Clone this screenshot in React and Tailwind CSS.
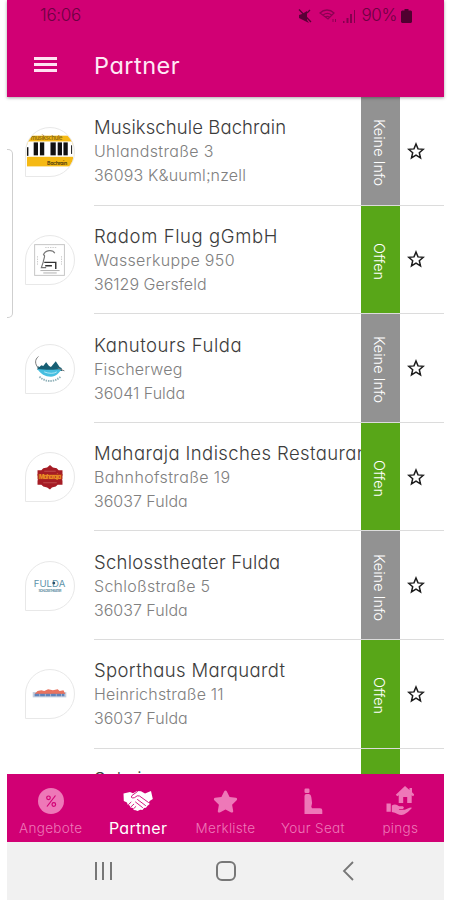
import React from "react";
import { FaStar } from "react-icons/fa";

const MusikLogo = () => (
  <svg viewBox="0 0 50 50" className="h-full w-full">
    <rect x="1" y="8" width="48" height="32" fill="#f5b914" />
    <rect x="1" y="14" width="48" height="16" fill="#fff" />
    <g fill="#111">
      <rect x="8" y="15" width="4.500" height="13.500" />
      <rect x="14.500" y="15" width="4.500" height="13.500" />
      <rect x="25.500" y="15" width="5.500" height="13.500" />
      <rect x="33" y="15" width="4.500" height="13.500" />
      <rect x="39" y="15" width="4.500" height="13.500" />
      <rect x="1" y="20" width="1.500" height="9" />
      <rect x="47" y="18" width="1" height="9" />
    </g>
    <text x="5" y="13" fontSize="6" fontWeight="600" fill="#8c6a12" textLength="33">
      musikschule
    </text>
    <text x="22" y="38.500" fontSize="5.500" fontWeight="700" fill="#5c480f" textLength="21">
      Bachrain
    </text>
  </svg>
);

const RadomLogo = () => (
  <svg viewBox="0 0 50 50" className="h-full w-full" fill="none">
    <rect x="9" y="9" width="31" height="32" stroke="#c4c4c4" />
    <path d="M20 12h12M12 21v10M37 21v10" stroke="#ccc" strokeDasharray="1.500 1" />
    <path
      d="M30 18c-2-4-10-4-12 2M18 20c3-1 0 5 0 7l-2 6h5"
      stroke="#777"
      strokeWidth="1.200"
    />
    <path d="M19 27.500h12v7M20 31h7" stroke="#333" strokeWidth="1.500" />
    <path d="M15 36h20M18 38.500h14" stroke="#999" strokeWidth="0.800" />
  </svg>
);

const KanuLogo = () => (
  <svg viewBox="0 0 50 50" className="h-full w-full" fill="none">
    <path d="M12 26v-4l2 1 2-2 2 1 3-4 3 4 2 1 5-6 4 6 2 1 1 3z" fill="#175f74" />
    <path d="M12 25c7 1 19 1 25 0-2 4-6 8-11 8-6 0-11-3-14-8z" fill="#47bfe0" />
    <path d="M19 28c5 2 10 2 13 0" stroke="#b5e8f5" />
    <path d="M13 12c-4 3-4 8 0 12M33 24l7 3" stroke="#777" />
    <path d="M14 33c6 6 16 6 22 0" stroke="#8fb0b8" strokeWidth="2" strokeDasharray="1.500 1" />
  </svg>
);

const MaharajaLogo = () => (
  <svg viewBox="0 0 50 50" className="h-full w-full">
    <path
      d="M25 12.500l3 2.500 4 1 2 2h4v5l-1 3 1 3v4h-5l-2 2-4 1-2 2-3-2-4-1-2-2h-4v-4l1-3-1-3v-5h4l2-2 4-1z"
      fill="#a51c25"
    />
    <rect x="12" y="22" width="26" height="5.500" fill="#b2351f" />
    <text x="13.500" y="27" fontSize="6" fontWeight="700" fill="#f09a27" textLength="23">
      Maharaja
    </text>
    <path d="M19 19h12M18 31h14" stroke="#c65a5a" strokeWidth="0.800" />
  </svg>
);

const FuldaLogo = () => (
  <svg viewBox="0 0 50 50" className="h-full w-full">
    <text x="8" y="26" fontSize="10" fill="#5e94aa" textLength="33">
      FULDA
    </text>
    <circle cx="29" cy="22" r="1.500" fill="#27506b" />
    <text x="13" y="31" fontSize="3.500" fontWeight="700" fill="#6e98aa" textLength="24">
      SCHLOSSTHEATER
    </text>
  </svg>
);

const SportLogo = () => (
  <svg viewBox="0 0 50 50" className="h-full w-full">
    <rect x="7" y="23" width="35" height="5.500" fill="#c3cddd" />
    <path d="M9 25l3-3 4-1 3 1 4-2 5 1 5-1 2 2 4-1 2 4z" fill="#e8735f" />
    <path d="M9 26h31" stroke="#5f83bb" strokeWidth="2.500" strokeDasharray="5 0.700" />
  </svg>
);

const partners = [
  {
    name: "Musikschule Bachrain",
    nameClass: "tracking-[0.1px]",
    street: "Uhlandstraße 3",
    streetClass: "tracking-[0.35px]",
    city: "36093 K&uuml;nzell",
    cityClass: "tracking-[0.17px]",
    open: false,
    Logo: MusikLogo,
  },
  {
    name: "Radom Flug gGmbH",
    nameClass: "tracking-[0.6px]",
    street: "Wasserkuppe 950",
    streetClass: "tracking-[0.33px]",
    city: "36129 Gersfeld",
    cityClass: "tracking-normal",
    open: true,
    Logo: RadomLogo,
  },
  {
    name: "Kanutours Fulda",
    nameClass: "tracking-[0.5px]",
    street: "Fischerweg",
    streetClass: "tracking-[0.2px]",
    city: "36041 Fulda",
    cityClass: "tracking-normal",
    open: false,
    Logo: KanuLogo,
  },
  {
    name: "Maharaja Indisches Restaurant",
    nameClass: "tracking-[0.4px]",
    street: "Bahnhofstraße 19",
    streetClass: "tracking-[0.38px]",
    city: "36037 Fulda",
    cityClass: "tracking-normal",
    open: true,
    Logo: MaharajaLogo,
  },
  {
    name: "Schlosstheater Fulda",
    nameClass: "tracking-[0.25px]",
    street: "Schloßstraße 5",
    streetClass: "tracking-[0.28px]",
    city: "36037 Fulda",
    cityClass: "tracking-normal",
    open: false,
    Logo: FuldaLogo,
  },
  {
    name: "Sporthaus Marquardt",
    nameClass: "tracking-[0.36px]",
    street: "Heinrichstraße 11",
    streetClass: "tracking-[0.2px]",
    city: "36037 Fulda",
    cityClass: "tracking-normal",
    open: true,
    Logo: SportLogo,
  },
  {
    name: "Salmina",
    nameClass: "tracking-normal",
    street: "",
    city: "",
    open: true,
    Logo: null,
  },
];

const PercentIcon = () => (
  <svg viewBox="0 0 26 26" className="h-[26px] w-[26px]">
    <circle cx="13" cy="13" r="13" fill="currentColor" />
    <g fill="none" stroke="#d10074" strokeWidth="1.200">
      <path d="M17.500 7.500l-8.500 11" />
      <circle cx="10.500" cy="9.800" r="1.800" />
      <circle cx="15.800" cy="16.500" r="1.800" />
    </g>
  </svg>
);

const HandshakeIcon = () => (
  <svg viewBox="0 0 30 22" className="h-[22px] w-[30px]">
    <path
      d="M.5 3.500L7 2l3 1.200L14 1l4 .3 4 2.200L28 1l1.800 8-2.800 1.800-1 1.200.5 2.200-2 1.500-1.500 2-2 .3-1.500 2-2.200-.2L14.500 21l-1.800-.8-2-.3-1-1.900-2.200-.5-.8-2-2-.7L4 12.500.8 11z"
      fill="currentColor"
    />
    <path
      d="M14.500 1.500L9 5.500q-1.500 1.800.2 2.500 2 .5 5-2.200l2.300.2 9 6.500M14.500 9.500l8 6M12.500 12l7 5.500M5.500 14.500l2.500-2.300M8 16.800l2.800-2.600M10.500 18.800l2.300-2.200"
      fill="none"
      stroke="#d10074"
      strokeWidth="0.900"
      strokeLinecap="round"
    />
  </svg>
);

const SeatIcon = () => (
  <svg viewBox="0 0 20 27" className="h-[27px] w-5" fill="currentColor">
    <rect x="1.500" y="0.500" width="5" height="4.500" rx="1.200" />
    <path d="M1.500 8Q1.500 6 3.500 6H6q2 .3 2.300 3l.8 6-.8 3.700.7 1.500H17q2.300 0 2.300 2.300V26H1.500z" />
  </svg>
);

const HouseHandIcon = () => (
  <svg viewBox="0 0 28 30" className="h-[30px] w-7" fill="currentColor">
    <path d="M19 0l4.500 4V2H26v4.200l2.500 2.600-1.500 1.400-1.300-1V17h-4.500v-6h-4v6h-4.500V9.200l-1.400 1L9.800 8.800z" />
    <path d="M.5 17.500h4.300v8.300H.5zM5.800 19.500c3-2 5-1 7.500.8h3.500q2.200 1.600 0 2.600h-4l.5.900h5.500l4.700-2q3-1 2 .8-4 4.500-7.500 6-3.500 1-6.500-.6-2.500-1.500-5.700-2z" />
  </svg>
);

const tabs = [
  { label: "Angebote", icon: <PercentIcon /> },
  { label: "Partner", icon: <HandshakeIcon />, active: true },
  { label: "Merkliste", icon: <FaStar className="h-[25px] w-[25px]" /> },
  { label: "Your Seat", icon: <SeatIcon /> },
  { label: "pings", icon: <HouseHandIcon /> },
];

const StatusBar = () => (
  <div className="flex h-8 items-center justify-between pr-8 pl-[33px] text-[17px] font-light text-[#6d0042]">
    <span className="tracking-[-0.3px]">16:06</span>
    <div className="flex items-center gap-1.5">
      <svg viewBox="0 0 16 16" className="h-4 w-4" fill="#5a0037">
        <path d="M2 7l3-1 5-3v9l2 3-6-3-4-2z" />
        <path d="M2 1.500l12 12.500M10 5l3-3" stroke="#5a0037" strokeWidth="1.300" />
      </svg>
      <svg viewBox="0 0 18 16" className="h-4 w-[18px]" fill="none" stroke="#8c0053" strokeWidth="1.300">
        <path d="M1 5c4-4 10-4 14 0l-6 6-8-6zM4 7c3-2 6-2 8.500 0M6 9c2-1 3-1 4.500 0" />
        <path d="M14 11v3M16.500 11v3" strokeWidth="1" />
      </svg>
      <svg viewBox="0 0 13 14" className="h-3.5 w-[13px]" fill="#85004f">
        <path d="M0 12h1.500v2H0zM3.500 9H5.500v5h-2zM7 5h2v9H7zM11 1h1v13h-1z" />
      </svg>
      <span className="tracking-[-0.4px]">90%</span>
      <svg viewBox="0 0 11 14" className="-ml-0.5 h-3.5 w-[11px]" fill="#4f0030">
        <path d="M3.500 0h4v1.500H10l1 1V13l-1 1H1l-1-1V2.500l1-1h2.500z" />
      </svg>
    </div>
  </div>
);

const PartnerRow = ({ partner }) => {
  const { name, nameClass, street, streetClass, city, cityClass, open, Logo } = partner;
  return (
    <div className="flex h-[108.6px] shrink-0">
      <div className="w-[87px] shrink-0 pt-[29.5px] pl-[18px]">
        {/* Teardrop shaped logo */}
        <div className="h-[50px] w-[50px] overflow-hidden rounded-full rounded-bl-none border border-[#e8e8e8]">
          {Logo && <Logo />}
        </div>
      </div>
      <div className="flex min-w-0 flex-1 border-b border-[#dcdcdc]">
        <div className="w-[267px] shrink-0 overflow-hidden pt-[18.4px] font-light whitespace-nowrap">
          <div className={`text-[18.5px] leading-6 text-[#3c3c3c] ${nameClass}`}>{name}</div>
          <div className={`text-[16px] leading-6 text-[#808080] ${streetClass}`}>{street}</div>
          <div className={`text-[16px] leading-6 text-[#808080] ${cityClass}`}>{city}</div>
        </div>
        <div
          className={`flex w-[39px] shrink-0 items-center justify-center pt-1 text-[14.5px] font-light text-white ${
            open ? "bg-[#58a618]" : "bg-[#929292]"
          }`}
        >
          <span className="pr-0.5 [writing-mode:vertical-rl]">{open ? "Offen" : "Keine Info"}</span>
        </div>
        <div className="flex flex-1 items-center pl-[7px]">
          <svg viewBox="0 0 18 18" className="h-[18px] w-[18px]" fill="none" stroke="#1c1c1c" strokeWidth="1.500">
            <path d="M9 2l2 4.900 5.300.4-4 3.400 1.200 5.200L9 13.100l-4.500 2.800 1.200-5.200-4-3.400 5.300-.4z" />
          </svg>
        </div>
      </div>
    </div>
  );
};

const App = () => {
  return (
    <div className="h-[900px] w-[450px] overflow-hidden bg-white pl-[7px] font-['Inter',sans-serif] [font-feature-settings:'cv11','ss03']">
      <div className="relative flex h-full w-[437px] flex-col">
        <header className="z-10 h-[97px] shrink-0 bg-[#d10074] shadow-[0_1px_3px_rgba(0,0,0,0.35)]">
          <StatusBar />
          <div className="flex h-[65px] items-center pl-[27px]">
            <div className="flex w-[23px] flex-col gap-[3px]">
              <span className="h-[3px] bg-[#ffe3f2]" />
              <span className="h-[3px] bg-[#ffe3f2]" />
              <span className="h-[3px] bg-[#ffe3f2]" />
            </div>
            <h1 className="ml-[37px] pt-0.5 text-[23.5px] tracking-[0.5px] text-[#ffe9f5]">Partner</h1>
          </div>
        </header>

        <main className="flex min-h-0 flex-1 flex-col overflow-hidden">
          {partners.map((partner) => (
            <PartnerRow key={partner.name} partner={partner} />
          ))}
        </main>

        {/* Edge panel handle */}
        <div className="absolute top-[149px] left-0 h-[169px] w-1.5 rounded-r-[5px] border border-l-0 border-[#cfcfcf]" />

        <nav className="grid h-[68px] shrink-0 grid-cols-5 bg-[#d10074]">
          {tabs.map((tab) => (
            <div
              key={tab.label}
              className={`flex flex-col items-center ${tab.active ? "text-white" : "text-[#ee78b8]"}`}
            >
              <div className="mt-3 flex h-[30px] items-center">{tab.icon}</div>
              <span
                className={`leading-6 whitespace-nowrap ${
                  tab.active ? "text-[16px] tracking-[0.3px]" : "text-[13.5px] font-light tracking-[0.3px]"
                }`}
              >
                {tab.label}
              </span>
            </div>
          ))}
        </nav>

        <div className="flex h-[58px] shrink-0 items-center bg-[#f1f1f1] text-[#777]">
          <svg viewBox="0 0 20 20" className="ml-[87px] h-5 w-5" stroke="currentColor" strokeWidth="2">
            <path d="M2 1v18M9 1v18M17 1v18" />
          </svg>
          <svg viewBox="0 0 22 22" className="ml-[101px] h-[22px] w-[22px]" fill="none" stroke="currentColor" strokeWidth="2">
            <rect x="2" y="2" width="18" height="18" rx="5" />
          </svg>
          <svg viewBox="0 0 12 20" className="ml-[105px] h-5 w-3" fill="none" stroke="currentColor" strokeWidth="1.800">
            <path d="M11 1L2 10l9 9" />
          </svg>
        </div>
      </div>
    </div>
  );
};

export default App;
